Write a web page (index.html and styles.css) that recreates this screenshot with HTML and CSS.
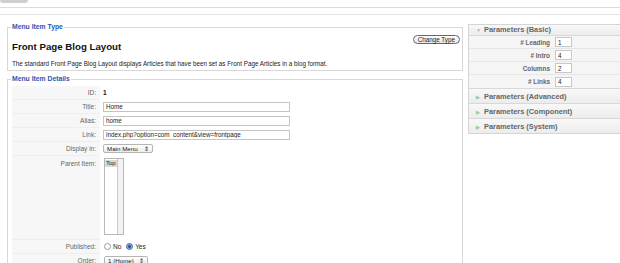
FILE: index.html
```html
<!DOCTYPE html>
<html lang="en">
<head>
    <meta charset="UTF-8">
    <title>Menu Item: [ Edit ]</title>
    <link rel="stylesheet" href="styles.css">
</head>
<body>
    <div class="topbar">
        <div class="tab-stub"></div>
    </div>
    <div class="subbar"></div>

    <div class="main">
        <div class="col-left">
            <fieldset class="box box-type">
                <legend>Menu Item Type</legend>
                <button type="button" class="btn-pill">Change Type</button>
                <h2>Front Page Blog Layout</h2>
                <p class="desc">The standard Front Page Blog Layout displays Articles that have been set as Front Page Articles in a blog format.</p>
            </fieldset>

            <fieldset class="box box-details">
                <legend>Menu Item Details</legend>
                <table class="admintable">
                    <tr>
                        <td class="key">ID:</td>
                        <td><strong>1</strong></td>
                    </tr>
                    <tr>
                        <td class="key">Title:</td>
                        <td><input class="inputbox" type="text" value="Home"></td>
                    </tr>
                    <tr>
                        <td class="key">Alias:</td>
                        <td><input class="inputbox" type="text" value="home"></td>
                    </tr>
                    <tr>
                        <td class="key">Link:</td>
                        <td><input class="inputbox" type="text" value="index.php?option=com_content&amp;view=frontpage"></td>
                    </tr>
                    <tr>
                        <td class="key">Display in:</td>
                        <td><span class="fake-select sel-menu">Main Menu <i>&#x21D5;</i></span></td>
                    </tr>
                    <tr class="row-parent">
                        <td class="key">Parent Item:</td>
                        <td>
                            <div class="listbox">
                                <div class="list-items"><span class="opt-sel">Top</span></div>
                                <div class="list-scroll"></div>
                            </div>
                        </td>
                    </tr>
                    <tr>
                        <td class="key">Published:</td>
                        <td class="radios">
                            <span class="radio"></span>No
                            <span class="radio on"></span>Yes
                        </td>
                    </tr>
                    <tr>
                        <td class="key">Order:</td>
                        <td><span class="fake-select sel-order">1 (Home) <i>&#x21D5;</i></span></td>
                    </tr>
                </table>
            </fieldset>
        </div>

        <div class="col-right">
            <div class="pane">
                <div class="pane-head open"><span class="arrow">&#9660;</span>Parameters (Basic)</div>
                <div class="pane-body">
                    <div class="param"><label>#&nbsp;Leading</label><input type="text" value="1"></div>
                    <div class="param"><label>#&nbsp;Intro</label><input type="text" value="4"></div>
                    <div class="param"><label>Columns</label><input type="text" value="2"></div>
                    <div class="param"><label>#&nbsp;Links</label><input type="text" value="4"></div>
                </div>
                <div class="pane-head"><span class="arrow">&#9654;</span>Parameters (Advanced)</div>
                <div class="pane-head"><span class="arrow">&#9654;</span>Parameters (Component)</div>
                <div class="pane-head"><span class="arrow">&#9654;</span>Parameters (System)</div>
            </div>
        </div>
    </div>
</body>
</html>
```

FILE: styles.css
```css
body {
    margin: 0;
    font-family: "Liberation Sans", Arial, sans-serif;
    font-size: 6.5px;
    color: #333;
    background: #fff;
    overflow: hidden;
}
.topbar {
    height: 7px;
    border-bottom: 1px solid #dcdcdc;
}
.tab-stub {
    width: 28px;
    height: 3px;
    background: #cfcfcf;
    border-radius: 0 0 10px 10px;
}
.subbar {
    height: 6px;
    border-bottom: 1px solid #e2e2e2;
}
.main {
    display: flex;
    align-items: flex-start;
}
.col-left {
    margin-left: 7px;
    width: 456px;
    flex: none;
}
.col-right {
    margin-left: 5px;
    margin-top: 9px;
    width: 160px;
    flex: none;
}

/* fieldsets */
.box {
    margin: 0;
    padding: 0 4px 2px;
    border: 1px solid #d8d8d8;
    box-sizing: border-box;
    width: 456px;
}
.box legend {
    font-size: 6.8px;
    line-height: 8px;
    font-weight: bold;
    color: #1d5bb3;
    padding: 0 1px;
    margin-left: -1px;
}
.box-type {
    margin-top: 8px;
}
.box-type h2 {
    margin: 10px 0 0;
    font-size: 9.7px;
    line-height: 12px;
    font-weight: bold;
    color: #111;
}
.box-type .desc {
    margin: 7px 0 0;
    line-height: 8px;
    font-size: 6.3px;
    color: #222;
}
.btn-pill {
    float: right;
    margin: 4px -2px 0 0;
    height: 9px;
    padding: 0 4px;
    font-family: inherit;
    font-size: 6.3px;
    line-height: 7px;
    color: #222;
    background: linear-gradient(#fff, #e6e6e6);
    border: 1px solid #666;
    border-radius: 5px;
}
.box-details {
    margin-top: 4px;
    height: 190px;
    padding-top: 3px;
}

/* details table */
.admintable {
    border-collapse: collapse;
}
.admintable td {
    height: 13px;
    padding: 0 0 0 3px;
    border-bottom: 1px solid #fff;
    vertical-align: middle;
    color: #222;
}
.admintable td.key {
    width: 84px;
    padding: 0 4px 0 0;
    text-align: right;
    background: #f7f7f7;
    border-bottom: 1px solid #eeeeee;
    color: #666;
}
.admintable strong {
    color: #111;
}
.inputbox {
    width: 187px;
    height: 10px;
    box-sizing: border-box;
    padding: 0 2px;
    border: 1px solid #c4c4c4;
    font-family: inherit;
    font-size: 6.3px;
    color: #222;
    display: block;
}
.fake-select {
    display: inline-flex;
    align-items: center;
    justify-content: space-between;
    box-sizing: border-box;
    height: 9px;
    padding: 0 3px;
    border: 1px solid #b5b5b5;
    border-radius: 2px;
    background: linear-gradient(#fff, #ececec);
    font-size: 6.2px;
    color: #222;
    vertical-align: middle;
}
.fake-select i {
    font-style: normal;
    font-size: 6px;
}
.sel-menu {
    width: 50px;
}
.sel-order {
    width: 44px;
    margin-left: 1px;
}
.row-parent td {
    height: 83px;
    vertical-align: top;
}
.row-parent td.key {
    padding-top: 4px;
    box-sizing: border-box;
}
.listbox {
    display: flex;
    width: 20px;
    height: 77px;
    margin: 2px 0 0 1px;
    box-sizing: border-box;
    border: 1px solid #b8b8b8;
}
.list-items {
    flex: 1;
    padding-top: 1px;
}
.opt-sel {
    display: block;
    background: #dadada;
    line-height: 7px;
    padding-left: 1px;
    font-size: 6px;
}
.list-scroll {
    width: 5px;
    border-left: 1px solid #c8c8c8;
    background: #f2f2f2;
}
td.radios {
    display: table-cell;
}
.radio {
    display: inline-block;
    width: 5px;
    height: 5px;
    margin: 0 2px 0 1px;
    border: 1px solid #999;
    border-radius: 50%;
    background: #fff;
    vertical-align: middle;
}
.radio.on {
    margin-left: 3px;
    border-color: #4a6fa8;
    background: radial-gradient(circle, #2a4f8a 35%, #8fb0dd 45%);
}

/* parameters pane */
.pane {
    border: 1px solid #d5d5d5;
    border-right: none;
    background: #fff;
}
.pane-head {
    height: 14px;
    line-height: 15px;
    padding-left: 7px;
    font-size: 7.4px;
    font-weight: bold;
    color: #666;
    background: linear-gradient(#f8f8f8, #ececec);
    border-bottom: 1px solid #d8d8d8;
}
.pane-head.open {
    height: 10px;
    line-height: 10px;
}
.pane-head:last-child {
    border-bottom: none;
}
.arrow {
    display: inline-block;
    width: 5px;
    margin-right: 3px;
    font-size: 5px;
    color: #9c9;
}
.pane-body {
    background: #f5f5f5;
    border-bottom: 1px solid #d8d8d8;
}
.param {
    display: flex;
    align-items: center;
    height: 13px;
    border-bottom: 1px solid #e6e6e6;
    box-sizing: border-box;
}
.param:last-child {
    border-bottom: none;
}
.param label {
    width: 81px;
    text-align: right;
    font-weight: bold;
    color: #666;
    font-size: 6.4px;
}
.param input {
    width: 17px;
    height: 10px;
    margin-left: 5px;
    box-sizing: border-box;
    padding: 0 2px;
    border: 1px solid #c8c8c8;
    font-family: inherit;
    font-size: 6.3px;
    color: #222;
}
```
